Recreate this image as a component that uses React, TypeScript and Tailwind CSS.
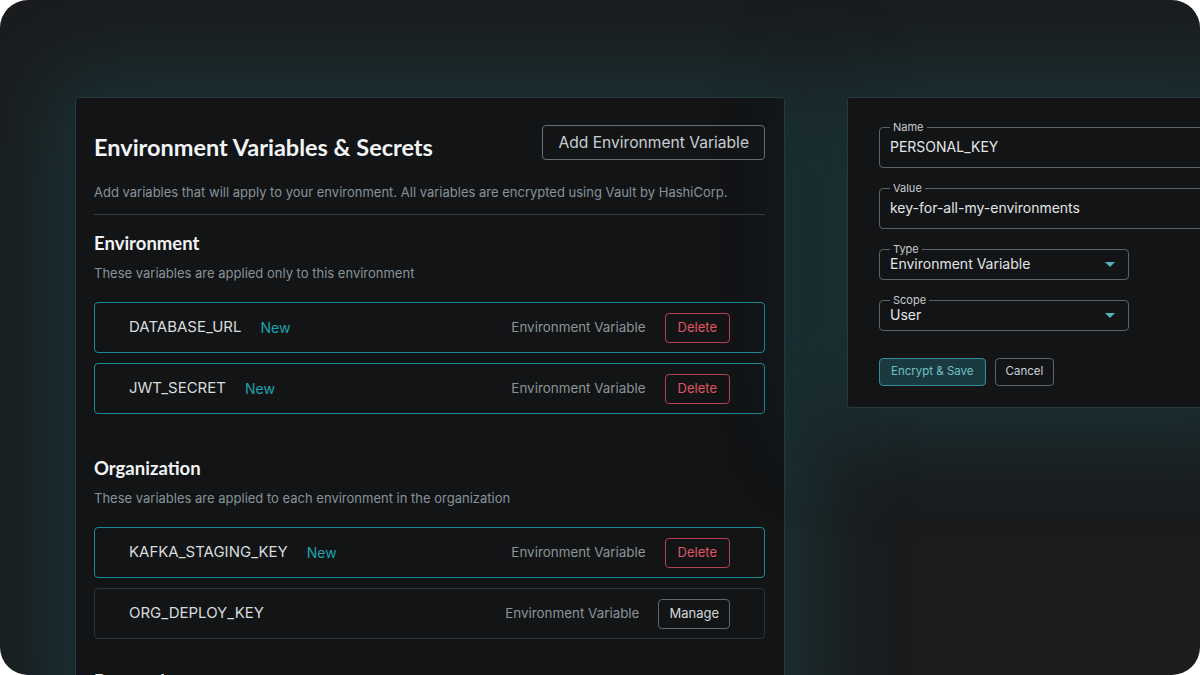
type Variable = {
  name: string;
  isNew?: boolean;
  action: 'Delete' | 'Manage';
};

const environmentVars: Variable[] = [
  { name: 'DATABASE_URL', isNew: true, action: 'Delete' },
  { name: 'JWT_SECRET', isNew: true, action: 'Delete' },
];

const organizationVars: Variable[] = [
  { name: 'KAFKA_STAGING_KEY', isNew: true, action: 'Delete' },
  { name: 'ORG_DEPLOY_KEY', action: 'Manage' },
];

function VariableRow({ variable }: { variable: Variable }) {
  const highlighted = variable.isNew;
  return (
    <div
      className={`flex h-[51px] items-center rounded-[4px] border pl-[34px] pr-[34px] ${
        highlighted ? 'border-[#198b95]' : 'border-[#2c3235]'
      }`}
    >
      <span className="text-[15px] text-[#d9dcde]">{variable.name}</span>
      {variable.isNew && <span className="ml-[19px] text-[14px] text-[#1aa3ae]">New</span>}
      <span className="ml-auto text-[13.4px] text-[#8b9497]">Environment Variable</span>
      {variable.action === 'Delete' ? (
        <button className="ml-[19px] h-[30px] rounded-[4px] border border-[#b5414b] px-[12px] text-[13px] text-[#e05563]">
          Delete
        </button>
      ) : (
        <button className="ml-[19px] h-[30px] rounded-[4px] border border-[#5e676a] px-[10px] text-[13px] text-[#d2d6d8]">
          Manage
        </button>
      )}
    </div>
  );
}

function Section({ title, description, vars, className }: { title: string; description: string; vars: Variable[]; className?: string }) {
  return (
    <section className={className}>
      <h2 className="font-['Lato'] text-[18.5px] font-bold leading-[22px] text-[#f1f3f4]">{title}</h2>
      <p className="mt-[10px] text-[13px] leading-[18px] text-[#87939a]">{description}</p>
      <div className="mt-[20px] flex flex-col gap-[10px]">
        {vars.map((v) => (
          <VariableRow key={v.name} variable={v} />
        ))}
      </div>
    </section>
  );
}

function OutlinedField({ label, value, select, className }: { label: string; value: string; select?: boolean; className?: string }) {
  return (
    <fieldset className={`rounded-[4px] border border-[#5c6468] px-[10px] ${className ?? ''}`}>
      <legend className="px-[3px] text-[11px] leading-[12px] text-[#c9cdd0]">{label}</legend>
      <div className={`flex items-center ${select ? 'pb-[6px] leading-[18px]' : 'pb-[10px] pt-[4px] leading-[20px]'}`}>
        <span className="text-[14px] text-[#e3e6e8]">{value}</span>
        {select && (
          <svg className="ml-auto mr-[3px]" width="10" height="5" viewBox="0 0 10 5">
            <path d="M0 0 L10 0 L5 5 Z" fill="#4fb4be" />
          </svg>
        )}
      </div>
    </fieldset>
  );
}

export default function App() {
  return (
    <div className="h-[675px] w-[1200px] bg-white font-['Inter',sans-serif]">
      <div className="flex h-full gap-[62px] overflow-hidden rounded-[28px] bg-[#1a1c1e] pl-[75px] pt-[97px]">
        {/* main panel */}
        <div className="h-[640px] w-[710px] shrink-0 rounded-[3px] border border-[#26393c] bg-[#121416] pl-[18px] pr-[19px] pt-[27px] shadow-[0_0_90px_25px_rgba(26,66,72,0.6)]">
          <div className="flex items-start justify-between">
            <h1 className="pt-[8px] font-['Lato'] text-[23.5px] font-bold leading-[28px] text-[#f3f5f6]">
              Environment Variables &amp; Secrets
            </h1>
            <button className="h-[35px] rounded-[4px] border border-[#667073] px-[15px] text-[15.6px] text-[#c9cfd1]">
              Add Environment Variable
            </button>
          </div>
          <p className="mt-[22px] text-[13px] leading-[18px] text-[#87939a]">
            Add variables that will apply to your environment. All variables are encrypted using Vault by HashiCorp.
          </p>
          <div className="mt-[13px] h-px bg-[#353d40]" />

          <Section
            className="mt-[17px]"
            title="Environment"
            description="These variables are applied only to this environment"
            vars={environmentVars}
          />
          <Section
            className="mt-[43px]"
            title="Organization"
            description="These variables are applied to each environment in the organization"
            vars={organizationVars}
          />
          <h2 className="mt-[31px] font-['Lato'] text-[18.5px] font-bold leading-[22px] text-[#f1f3f4]">Personal</h2>
        </div>

        {/* editor panel */}
        <div className="h-[311px] w-[400px] shrink-0 rounded-[3px] border border-[#26393c] bg-[#121416] pl-[31px] pr-[32px] pt-[23px] shadow-[0_0_90px_25px_rgba(26,66,72,0.6)]">
          <OutlinedField label="Name" value="PERSONAL_KEY" />
          <OutlinedField className="mt-[14px]" label="Value" value="key-for-all-my-environments" />
          <OutlinedField className="mt-[14px] w-[250px]" label="Type" value="Environment Variable" select />
          <OutlinedField className="mt-[14px] w-[250px]" label="Scope" value="User" select />
          <div className="mt-[27px] flex gap-[9px]">
            <button className="h-[28px] rounded-[4px] border border-[#2e8d97] bg-[#1b3a3f] px-[11px] text-[11.5px] text-[#6fc0c8]">
              Encrypt &amp; Save
            </button>
            <button className="h-[28px] rounded-[4px] border border-[#5c6468] px-[10px] text-[11.5px] text-[#cdd1d3]">
              Cancel
            </button>
          </div>
        </div>
      </div>
    </div>
  );
}
